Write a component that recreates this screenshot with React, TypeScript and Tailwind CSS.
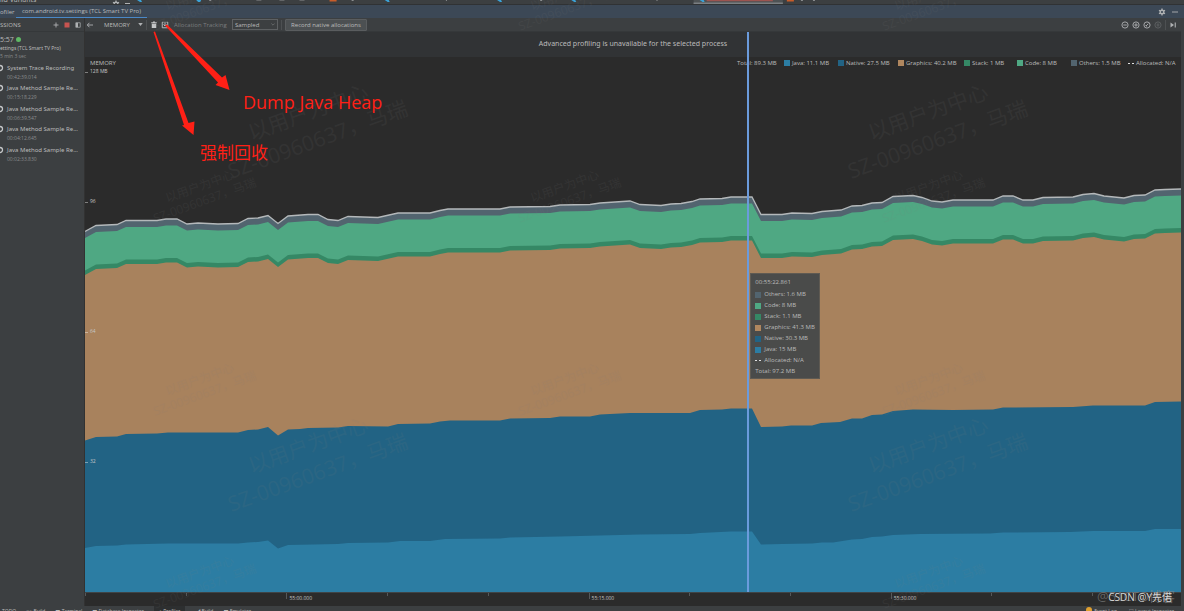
import { useState } from 'react';
import type { ReactNode } from 'react';
import clsx from 'clsx';

type Point = [number, number];

// Plot space: x 85..1181, y 57..592
const BASELINE = 592;

const TOTAL: Point[] = [
  [85, 231.5], [96, 225.5], [117, 224.5], [126, 220.5], [157, 220.5], [166, 219], [177, 219], [187, 224],
  [198, 223], [218, 224], [238, 223.5], [248, 218.5], [258, 218], [268, 215.5], [278, 223.5], [288, 216],
  [308, 214.5], [318, 214.5], [328, 219.5], [338, 220.5], [348, 216.5], [378, 217.5], [398, 213], [430, 213],
  [440, 210.5], [448, 209], [500, 209], [510, 207], [550, 206.5], [560, 205], [590, 204.5], [600, 203],
  [630, 201], [640, 204.5], [661, 205.5], [671, 204], [681, 203.5], [692, 201.5], [700, 199], [722, 198.5],
  [731, 197], [752, 197], [761, 214.5], [782, 214.5], [792, 213], [812, 213.5], [822, 211.5], [841, 210],
  [852, 206], [862, 205.5], [872, 203], [882, 202.5], [893, 196.5], [913, 195.5], [922, 197.5], [932, 201],
  [942, 202], [953, 200], [993, 200], [1003, 196], [1013, 196], [1023, 200], [1033, 200], [1043, 197.5],
  [1073, 197], [1083, 194.5], [1094, 193.5], [1104, 196], [1124, 198], [1134, 195.5], [1145, 195], [1155, 190],
  [1165, 189.5], [1181, 189],
];

const NATIVE: Point[] = [
  [85, 440.5], [96, 437], [117, 436.5], [126, 434], [157, 433.5], [168, 432.5], [198, 432.5], [238, 432.5],
  [248, 430], [258, 429.5], [268, 427], [278, 435.5], [288, 429.5], [300, 429], [308, 428], [338, 427.5],
  [348, 426], [388, 426.5], [398, 424], [430, 423.5], [440, 421.5], [450, 420.5], [500, 420.5], [510, 418.5],
  [550, 418], [560, 416.5], [590, 416.5], [600, 414.5], [630, 413], [690, 413], [700, 410], [722, 409.5],
  [731, 408.5], [752, 408.5], [761, 427], [782, 426.5], [791, 425.5], [812, 425.5], [821, 423], [840, 422],
  [852, 418.5], [862, 418.5], [872, 415], [882, 414.5], [893, 411], [913, 409.5], [953, 410], [993, 409.5],
  [1003, 407.5], [1073, 407], [1093, 405.5], [1145, 405.5], [1155, 402], [1181, 401.5],
];

const JAVA: Point[] = [
  [85, 548], [96, 546], [117, 545.5], [126, 544.5], [168, 543.5], [238, 543.5], [248, 542.5], [258, 542],
  [268, 540.5], [278, 548.5], [288, 545], [338, 544], [348, 543], [388, 542.5], [400, 541], [430, 541],
  [445, 539], [500, 538.5], [510, 537.5], [560, 536.5], [600, 535.5], [640, 534.5], [690, 534], [700, 533],
  [731, 531.5], [752, 531.5], [761, 544.5], [782, 544], [812, 543.5], [822, 542.5], [833, 542.5], [852, 539.5],
  [862, 539], [872, 537], [882, 536.5], [893, 535], [920, 534], [990, 533.5], [1003, 532.5], [1070, 532],
  [1093, 531], [1145, 531], [1155, 529], [1181, 529],
];

const toLine = (points: Point[]) => points.map(([x, y]) => `${x},${y}`).join(' ');
const shift = (points: Point[], dy: number): Point[] => points.map(([x, y]) => [x, y + dy]);
const toArea = (points: Point[]) => `${toLine(points)} 1181,${BASELINE} 85,${BASELINE}`;

const AREAS = [
  { points: TOTAL, fill: '#52646f' },
  { points: shift(TOTAL, 6.5), fill: '#4fa883' },
  { points: shift(TOTAL, 39), fill: '#358865' },
  { points: shift(TOTAL, 43.5), fill: '#a8825d' },
  { points: NATIVE, fill: '#226384' },
  { points: JAVA, fill: '#2c7da3' },
];

const LEGEND = [
  { label: 'Total: 89.3 MB', swatch: '', width: 'w-[47px]' },
  { label: 'Java: 11.1 MB', swatch: 'bg-[#2c7da3]', width: 'w-[54px]' },
  { label: 'Native: 27.5 MB', swatch: 'bg-[#226384]', width: 'w-[60px]' },
  { label: 'Graphics: 40.2 MB', swatch: 'bg-[#b0875f]', width: 'w-[66px]' },
  { label: 'Stack: 1 MB', swatch: 'bg-[#358865]', width: 'w-[53px]' },
  { label: 'Code: 8 MB', swatch: 'bg-[#4fa883]', width: 'w-[54px]' },
  { label: 'Others: 1.5 MB', swatch: 'bg-[#52646f]', width: 'w-[57px]' },
  { label: 'Allocated: N/A', swatch: 'dashed', width: 'w-[50px]' },
];

const TOOLTIP = [
  { label: 'Others: 1.6 MB', swatch: 'bg-[#52646f]' },
  { label: 'Code: 8 MB', swatch: 'bg-[#4fa883]' },
  { label: 'Stack: 1.1 MB', swatch: 'bg-[#358865]' },
  { label: 'Graphics: 41.3 MB', swatch: 'bg-[#b0875f]' },
  { label: 'Native: 30.3 MB', swatch: 'bg-[#226384]' },
  { label: 'Java: 15 MB', swatch: 'bg-[#2c7da3]' },
  { label: 'Allocated: N/A', swatch: 'dashed' },
];

const RECORDINGS = [
  { name: 'System Trace Recording', time: '00:42:39.014' },
  { name: 'Java Method Sample Re...', time: '00:15:18.229' },
  { name: 'Java Method Sample Re...', time: '00:06:39.547' },
  { name: 'Java Method Sample Re...', time: '00:04:12.645' },
  { name: 'Java Method Sample Re...', time: '00:02:33.830' },
];

const TIME_TICKS = ['', '', '55:00.000', '', '', '55:15.000', '', '', '55:30.000', '', ''];

const WATERMARKS = [
  { place: 'left-[12.5%] top-[-14px]', big: false },
  { place: 'left-[43.3%] top-[-14px]', big: false },
  { place: 'left-[74.1%] top-[-14px]', big: false },
  { place: 'left-[12.5%] top-[178px]', big: false },
  { place: 'left-[43.3%] top-[178px]', big: false },
  { place: 'left-[74.1%] top-[178px]', big: false },
  { place: 'left-[12.5%] top-[371px]', big: false },
  { place: 'left-[43.3%] top-[371px]', big: false },
  { place: 'left-[74.1%] top-[371px]', big: false },
  { place: 'left-[12.5%] top-[564px]', big: false },
  { place: 'left-[74.1%] top-[564px]', big: false },
  { place: 'left-[18.4%] top-[97px]', big: true },
  { place: 'left-[70.8%] top-[97px]', big: true },
  { place: 'left-[18.4%] top-[430px]', big: true },
  { place: 'left-[70.8%] top-[430px]', big: true },
];

function Swatch({ kind }: { kind: string }) {
  if (kind === '') return null;
  if (kind === 'dashed') {
    return (
      <span className="flex w-[6px] shrink-0 justify-between">
        <span className="h-px w-[2px] bg-[#e0e0e0]" />
        <span className="h-px w-[2px] bg-[#e0e0e0]" />
      </span>
    );
  }
  return <span className={clsx('size-[6px] shrink-0', kind)} />;
}

function Icon({ children, className }: { children: ReactNode; className?: string }) {
  return (
    <svg
      viewBox="0 0 16 16"
      fill="none"
      stroke="currentColor"
      strokeWidth="1.8"
      className={clsx('size-[8px] shrink-0', className)}
      aria-hidden="true"
    >
      {children}
    </svg>
  );
}

function IconButton({ label, children, className }: { label: string; children: ReactNode; className?: string }) {
  return (
    <button type="button" aria-label={label} className={clsx('flex', className ?? 'text-[#afb1b3]')}>
      <Icon>{children}</Icon>
    </button>
  );
}

const GEAR = (
  <>
    <circle cx="8" cy="8" r="3.6" strokeWidth="2.8" />
    <path
      d="M8 1v3M8 12v3M2 4.5l2.6 1.5M11.4 10l2.6 1.5M2 11.5l2.6-1.5M11.4 6l2.6-1.5"
      strokeWidth="2.6"
    />
  </>
);

function EditorStrip() {
  return (
    <div className="flex h-[5px] shrink-0 overflow-hidden border-b border-[#303234] bg-[#3c3f41]">
      <div className="flex w-[130px] shrink-0 justify-between">
        <span className="-mt-[5px] text-[7px] leading-[9px] text-[#bbbbbb]">ild Variants</span>
        <span className="flex gap-[5px] text-[#afb1b3]">
          <Icon>{GEAR}</Icon>
          <span className="mt-[3px] h-px w-[5px] bg-[#afb1b3]" />
        </span>
      </div>
      <svg
        viewBox="130 0 1051 4"
        preserveAspectRatio="none"
        className="h-[4px] min-w-0 flex-1"
        aria-hidden="true"
      >
        <path d="M692 0h89v4h-89z" fill="#4e5254" />
        <path d="M692 2.5h89v1.500h-89z" fill="#7b7f82" />
        <path d="M705 0h66v1.3h-66z" fill="#9c5450" />
        <path
          d="M137 0h4l1 2h-2zM196 0h5l-1 2h-2zM384 0h4l1 2h-2zM496 0h4l1 2h-2zM570 0h4l1 2h-2zM698 0h4l1 2h-2z"
          fill="#3ba3d8"
        />
        <path d="M329 0h7v1.5h-7zM785 0h7v1.5h-7z" fill="#c75c2a" />
        <path
          d="M209 0h2v1h-2zM256 0h5v.6h-5zM279 0h5v.6h-5zM299 0h5v.6h-5zM351 0h2v1h-2zM445 0h1v1h-1zM539 0h2v1h-2zM655 0h1v1h-1zM799 0h2v1h-2zM811 0h2v1h-2z"
          fill="#8a8c8e"
        />
      </svg>
    </div>
  );
}

function TitleBar() {
  return (
    <div className="flex h-[13px] shrink-0 items-center bg-[#3c4856] pr-[5px] text-[6px] text-[#bbbbbb]">
      <span className="w-[16px] pt-px">ofiler</span>
      <span className="flex h-full items-center border-b border-[#4a88c7] px-[6px] pt-px">
        com.android.tv.settings (TCL Smart TV Pro)
      </span>
      <div className="ml-auto flex items-center gap-[5px]">
        <IconButton label="Settings">{GEAR}</IconButton>
        <IconButton label="Hide">
          <path d="M2 8h12" />
        </IconButton>
      </div>
    </div>
  );
}

function Sidebar() {
  return (
    <aside className="w-[85px] shrink-0 overflow-hidden border-r border-[#323232] bg-[#3c3f41] text-[6px] leading-[8px] text-[#bbbbbb]">
      <div className="flex h-[14px] items-center justify-between border-b border-[#35383a] pr-[2px]">
        <h2>SSIONS</h2>
        <div className="flex gap-[3px]">
          <IconButton label="Start new session">
            <path d="M8 3v10M3 8h10" />
          </IconButton>
          <IconButton label="Stop session" className="text-[#c75450]">
            <path d="M3 3h10v10H3z" fill="currentColor" stroke="none" />
          </IconButton>
          <IconButton label="Collapse sessions">
            <path d="M3.5 3.5h9v9h-9z" strokeWidth="1.4" />
            <path d="M4 3.5h4v9H4z" fill="currentColor" stroke="none" />
          </IconButton>
        </div>
      </div>
      <div className="pt-[3px]">
        <p className="flex items-center gap-[2px] text-[7px] leading-[9px]">
          5:57
          <span className="size-[5px] rounded-full bg-[#5fb865]" />
        </p>
        <p className="font-['Noto_Sans'] text-[5px] whitespace-nowrap">ettings (TCL Smart TV Pro)</p>
        <p className="text-[5px] text-[#8a8c8d]">5 min 3 sec</p>
      </div>
      <ul className="mt-[4px] grid h-[102px] grid-rows-5">
        {RECORDINGS.map((rec) => (
          <li key={rec.time} className="flex">
            <svg viewBox="0 0 7 8" className="h-[8px] w-[7px] shrink-0" aria-hidden="true">
              <path d="M0 1.500a2.500 2.500 0 0 1 0 5" fill="none" stroke="#c4c6c8" strokeWidth="1.300" />
            </svg>
            <div>
              <p className="font-['Noto_Sans'] leading-[9px] whitespace-nowrap">{rec.name}</p>
              <p className="text-[5px] text-[#8a8c8d]">{rec.time}</p>
            </div>
          </li>
        ))}
      </ul>
    </aside>
  );
}

function Toolbar() {
  const [stage, setStage] = useState('MEMORY');
  const [mode, setMode] = useState('Sampled');

  return (
    <div className="flex h-[14px] shrink-0 items-center border-b border-[#35383a] bg-[#3c3f41] pr-[4px] pl-px text-[6px] leading-[8px] text-[#bbbbbb]">
      <IconButton label="Back">
        <path d="M14 8H3M7 3.5L2.5 8L7 12.5" />
      </IconButton>
      <label className="relative ml-[10px] flex w-[42px] items-center">
        <span className="sr-only">Profiler stage</span>
        <select
          value={stage}
          onChange={(e) => setStage(e.target.value)}
          className="w-full appearance-none bg-transparent"
        >
          <option>MEMORY</option>
          <option>CPU</option>
        </select>
        <svg viewBox="0 0 6 4" className="absolute right-[3px] h-[3px] w-[5px]" aria-hidden="true">
          <path d="M0 0h6L3 4z" fill="#afb1b3" />
        </svg>
      </label>
      <span className="h-[10px] w-px bg-[#4d5052]" />
      <IconButton label="Force garbage collection" className="ml-[3px] text-[#c4c6c8]">
        <path d="M3.5 5.5h9V14h-9zM2.5 2.5h11v2h-11zM6 1h4v2H6z" fill="currentColor" stroke="none" />
      </IconButton>
      <IconButton label="Dump Java heap" className="ml-[3px] text-[#c4c6c8]">
        <path d="M5 2.5H2.5v11h11v-11H11M8 1.5v8M5 7l3 3l3-3" />
      </IconButton>
      <span className="ml-[5px] w-[58px] whitespace-nowrap text-[#7b7d7f]">Allocation Tracking</span>
      <label className="relative flex w-[46px] items-center">
        <span className="sr-only">Mode</span>
        <select
          value={mode}
          onChange={(e) => setMode(e.target.value)}
          className="h-[11px] w-full appearance-none border border-[#5e6163] bg-[#3c3f41] px-[2px]"
        >
          <option>Sampled</option>
          <option>Full</option>
        </select>
        <svg viewBox="0 0 6 4" className="absolute right-[3px] h-[3px] w-[4px]" aria-hidden="true">
          <path d="M.5.5L3 3L5.5.5" fill="none" stroke="#7b7d7f" />
        </svg>
      </label>
      <span className="mx-[3px] h-[10px] w-px bg-[#4d5052]" />
      <button
        type="button"
        className="h-[12px] w-[82px] rounded-[1px] border border-[#5a5d5f] bg-[#4c5052] whitespace-nowrap"
      >
        Record native allocations
      </button>
      <div className="ml-auto flex items-center gap-[3px]">
        <IconButton label="Zoom out">
          <circle cx="8" cy="8" r="6.2" />
          <path d="M4.5 8h7" />
        </IconButton>
        <IconButton label="Zoom in">
          <circle cx="8" cy="8" r="6.2" />
          <path d="M4.5 8h7M8 4.5v7" />
        </IconButton>
        <IconButton label="Reset zoom">
          <circle cx="8" cy="8" r="6.2" />
          <path d="M6 10l4.500-4.500M8 10H6V8" />
        </IconButton>
        <IconButton label="Zoom to selection" className="text-[#5f6264]">
          <circle cx="8" cy="8" r="6.2" />
          <path d="M6.5 5v6M9.5 5v6" />
        </IconButton>
        <span className="h-[10px] w-px bg-[#4d5052]" />
        <IconButton label="Go to live">
          <path d="M3 3v10l7-5z" fill="currentColor" stroke="none" />
          <path d="M12.5 3v10" strokeWidth="2.2" />
        </IconButton>
      </div>
    </div>
  );
}

function MemoryChart() {
  return (
    <div className="relative min-h-0 flex-1">
      <svg
        viewBox="85 57 1096 535"
        preserveAspectRatio="none"
        className="absolute inset-0 size-full"
        role="img"
        aria-label="Memory usage"
      >
        {AREAS.map((area) => (
          <polygon key={area.fill} points={toArea(area.points)} fill={area.fill} />
        ))}
        <polyline points={toLine(TOTAL)} fill="none" stroke="#b4b8ba" strokeWidth="1.3" />
      </svg>
      <div className="absolute inset-0 flex flex-col pt-[15px] text-[5px] text-[#c4c4c4]">
        {['128 MB', '96', '64', '32'].map((label) => (
          <div key={label} className="flex-1">
            <div className="flex h-0 items-center gap-[2px]">
              <span className="h-px w-[3px] bg-white/40" />
              {label}
            </div>
          </div>
        ))}
      </div>
      <div className="relative flex items-center justify-between pt-[2px] pl-[5px] text-[6px] leading-[8px] text-[#bbbbbb]">
        <h3>MEMORY</h3>
        <ul className="flex pr-[3px]">
          {LEGEND.map((item) => (
            <li key={item.label} className={clsx('flex items-center gap-[2px] whitespace-nowrap', item.width)}>
              <Swatch kind={item.swatch} />
              {item.label}
            </li>
          ))}
        </ul>
      </div>
    </div>
  );
}

function TimeAxis() {
  return (
    <div className="flex h-[14px] shrink-0 overflow-hidden border-t border-[#3f4446] bg-[#2b2b2b] text-[5px] leading-[10px] text-[#c4c4c4]">
      {TIME_TICKS.map((label, i) => (
        <div key={i} className="flex w-[9.19%] shrink-0 gap-[2px]">
          <span className={clsx('w-px bg-[#55585a]', label ? 'h-[6px]' : 'h-[3px]')} />
          {label}
        </div>
      ))}
    </div>
  );
}

function HoverCard() {
  return (
    <div className="absolute top-[241px] left-[60.7%] w-[70px] border border-[#5f5a52] bg-[#4a4b4a] px-[4px] pt-[3px] pb-px text-[6px] leading-[11px] text-[#bbbbbb]">
      <p>00:55:22.861</p>
      <ul className="mt-px">
        {TOOLTIP.map((item) => (
          <li key={item.label} className="flex items-center gap-[3px] whitespace-nowrap">
            <Swatch kind={item.swatch} />
            {item.label}
          </li>
        ))}
      </ul>
      <p>Total: 97.2 MB</p>
    </div>
  );
}

function StatusStrip() {
  return (
    <div className="flex h-[5px] shrink-0 justify-between overflow-hidden bg-[#3c3f41] text-[5px] leading-[8px] text-[#bbbbbb]">
      <div className="flex gap-[10px] pt-px pl-[2px]">
        <span>TODO</span>
        <span>⌥ Build</span>
        <span>■ Terminal</span>
        <span>■ Database Inspector</span>
        <span className="-mt-px bg-[#2d2f30] px-[5px] pt-px">◔ Profiler</span>
        <span>◢ Build</span>
        <span>■ Emulator</span>
      </div>
      <div className="flex gap-[12px] pt-px pr-[10px]">
        <span className="flex gap-[2px]">
          <span className="size-[6px] rounded-full bg-[#e0a030]" />
          Event Log
        </span>
        <span>▣ Layout Inspector</span>
      </div>
    </div>
  );
}

function Annotations() {
  return (
    <div className="pointer-events-none absolute inset-0 overflow-hidden">
      {WATERMARKS.map((mark) => (
        <p
          key={mark.place}
          className={clsx(
            'absolute -rotate-[20deg] whitespace-nowrap text-[#808080] opacity-10',
            mark.big ? 'text-[21px] leading-[29px]' : 'text-[12px] leading-[15px]',
            mark.place,
          )}
        >
          <span className={mark.big ? 'pl-[32px]' : 'pl-[18px]'}>以用户为中心</span>
          <br />
          SZ-00960637，马瑞
        </p>
      ))}
      <svg
        viewBox="0 0 240 140"
        className="absolute top-0 left-0 h-[140px] w-[240px]"
        fill="#ff2016"
        aria-hidden="true"
      >
        <path d="M153.500 32L155 31.500L188.500 123L194.500 121.500L193.500 135L182 125.500L184 125z" />
        <path d="M165 25.500L167 24.500L222 77.500L225.500 75L229.500 90L215.500 85L218 82.500z" />
      </svg>
      <p className="absolute top-[91px] left-[243px] text-[18px] leading-[22px] text-[#ff2016]">Dump Java Heap</p>
      <p className="absolute top-[142px] left-[200px] text-[17px] leading-[22px] text-[#ff2016]">强制回收</p>
      <p className="absolute right-[9px] bottom-[7px] text-[13px] leading-[16px] text-[#8a8a8a]/60">@51CTO博客</p>
      <p className="absolute right-[12px] bottom-[7px] text-[10px] leading-[13px] text-[#d8d8d8]">CSDN @Y先偌</p>
    </div>
  );
}

export default function App() {
  return (
    <div className="relative flex h-screen flex-col overflow-hidden bg-[#3c3f41] font-['Open_Sans','Noto_Sans_CJK_SC',sans-serif]">
      <EditorStrip />
      <TitleBar />
      <div className="flex min-h-0 flex-1">
        <Sidebar />
        <main className="mr-[3px] flex min-w-0 flex-1 flex-col bg-[#2b2b2b]">
          <Toolbar />
          <div className="relative flex min-h-0 flex-1 flex-col">
            <p className="flex h-[25px] shrink-0 items-center justify-center bg-[#313335] font-['Noto_Sans'] text-[7px] text-[#bbbbbb]">
              Advanced profiling is unavailable for the selected process
            </p>
            <MemoryChart />
            <TimeAxis />
            <span className="absolute top-0 bottom-[14px] left-[60.4%] w-[2px] bg-[#6b9bdc]" />
            <HoverCard />
          </div>
        </main>
      </div>
      <StatusStrip />
      <Annotations />
    </div>
  );
}
